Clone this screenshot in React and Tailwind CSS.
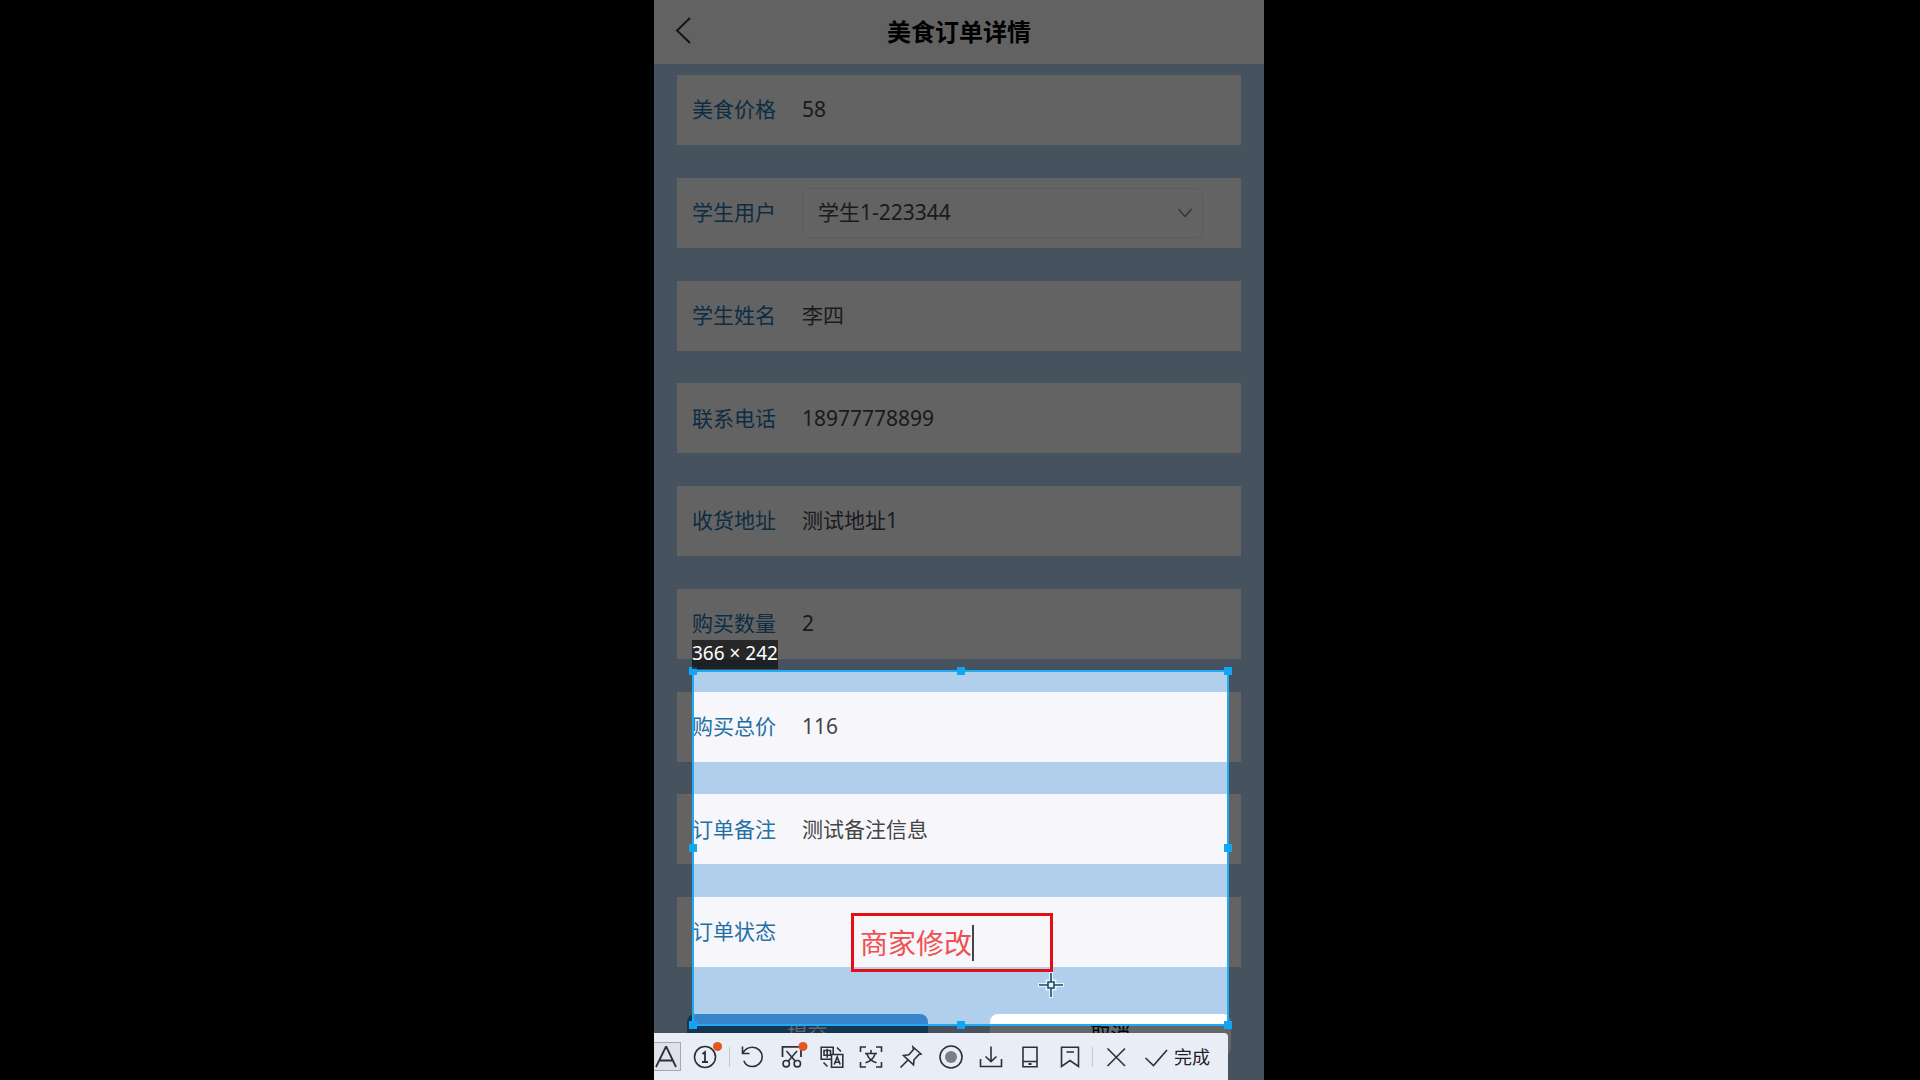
import { useState } from 'react'

const FIELDS = [
  { id: 'price', label: '美食价格', value: '58' },
  { id: 'student', label: '学生用户', value: '学生1-223344', type: 'select' },
  { id: 'name', label: '学生姓名', value: '李四' },
  { id: 'phone', label: '联系电话', value: '18977778899' },
  { id: 'address', label: '收货地址', value: '测试地址1' },
  { id: 'count', label: '购买数量', value: '2' },
  { id: 'total', label: '购买总价', value: '116' },
  { id: 'remark', label: '订单备注', value: '测试备注信息' },
  { id: 'status', label: '订单状态', value: '' },
]

const HANDLES = [
  '-left-[5px] -top-[5px]',
  'left-1/2 -top-[5px] -translate-x-1/2',
  '-right-[5px] -top-[5px]',
  '-left-[5px] top-1/2 -translate-y-1/2',
  '-right-[5px] top-1/2 -translate-y-1/2',
  '-left-[5px] -bottom-[5px]',
  'left-1/2 -bottom-[5px] -translate-x-1/2',
  '-right-[5px] -bottom-[5px]',
]

function Field({ field }) {
  const [value, setValue] = useState(field.value)
  return (
    <div className="flex h-[70px] items-center bg-[#f7f7fb] pl-[15px] pr-[38px] text-[21px]">
      <label htmlFor={field.id} className="w-[110px] shrink-0 text-[#2470a6]">{field.label}</label>
      {field.type === 'select' ? (
        <div className="relative flex-1">
          <select
            id={field.id} value={value} onChange={e => setValue(e.target.value)}
            className="h-[50px] w-full appearance-none rounded-md border border-[#e2e6e2] bg-[#f5f8f4] px-[15px] text-[#444] outline-none"
          >
            <option>学生1-223344</option>
          </select>
          <svg viewBox="0 0 16 10" className="pointer-events-none absolute right-2.5 top-5 h-2.5 w-4" fill="none" stroke="#888c88" strokeWidth="1.6">
            <path d="M1.500 1l6.500 7.500L14.500 1" />
          </svg>
        </div>
      ) : (
        <input
          id={field.id} type="text" value={value}
          onChange={e => setValue(e.target.value)}
          className="min-w-0 flex-1 bg-transparent text-[#444] outline-none"
        />
      )}
    </div>
  )
}

function Tool({ label, children }) {
  return (
    <button type="button" aria-label={label} className="shrink-0">
      <svg viewBox="0 0 24 24" className="size-6 overflow-visible" fill="none" stroke="#2c303a" strokeWidth="1.6">
        {children}
      </svg>
    </button>
  )
}

function Separator() {
  return <span className="h-5 w-px shrink-0 bg-[#c6c9d0]" />
}

function Toolbar() {
  return (
    <div className="absolute bottom-0 left-0 right-9 flex h-[47px] items-center rounded-tr-sm bg-[#e9edf6] pr-[18px]">
      <button type="button" aria-label="文字" className="-ml-0.5 flex h-[29px] w-[29px] items-center justify-center border border-[#a5a8ae] bg-[#dfe2e9]">
        <svg viewBox="0 0 24 24" className="size-6" fill="none" stroke="#2c303a" strokeWidth="1.8">
          <path d="M1 22L10.800 2h.6L21 22M4.500 15.500h13.300" />
        </svg>
      </button>
      <div className="ml-3 mr-3 flex">
        <Tool label="序号">
          <circle cx="12" cy="12" r="10.500" />
          <path d="M9.500 9l2.500-2v10M9 17h6" strokeWidth="1.800" />
          <circle cx="24.500" cy="1.500" r="4.500" fill="#e2571b" stroke="none" />
        </Tool>
      </div>
      <Separator />
      <div className="mx-[10px] flex flex-1 items-center justify-between">
        <Tool label="撤销">
          <path d="M2.500 1.500v7h7M2.800 8.200C5 4.200 8.500 2.300 12.500 2.300c5.500 0 9.700 4.300 9.700 9.600s-4.300 9.600-9.700 9.600c-4.200 0-7.300-2.200-8.700-5.800" />
        </Tool>
        <Tool label="裁剪">
          <path d="M2.500 12V1.800h18.500V12" strokeWidth="1.800" />
          <path d="M6.500 6l9 10.500M17 6l-9 10.500" />
          <circle cx="6.200" cy="18.700" r="3.200" />
          <circle cx="17.300" cy="18.700" r="3.200" />
          <circle cx="23" cy="1.500" r="4.500" fill="#e2571b" stroke="none" />
        </Tool>
        <Tool label="翻译">
          <path d="M11.500 14.200H1.200v-12h12V9M4 5.500h6.500v4.700H4zM7.200 3.700v9" />
          <path d="M11.500 9.500h11.300v12.800H11.500zM14.200 19.500l3-7.500 3 7.500M15.200 17.200h4M17 2.500l4 4M3.500 17.500l4 4" />
        </Tool>
        <Tool label="文字识别">
          <path d="M1.500 7V2H7M17 2h5.500v5M22.500 17v5H17M7 22H1.500v-5" />
          <path d="M12 5v3M6 8.500h12M8 9c1.200 4 4.500 7.300 9.500 8.800M16 9c-1.200 4-4.500 7.300-9.500 8.800" />
        </Tool>
        <Tool label="钉住">
          <path d="M14 2l8 7-2 .5-5 5.300-.5 5L4.500 10.500l5.300-.8 4.700-5.200zM9 15l-7.500 7.500" />
        </Tool>
        <Tool label="录制">
          <circle cx="12" cy="12" r="11" />
          <circle cx="12" cy="12" r="6" fill="#7b7e86" stroke="none" />
        </Tool>
        <Tool label="保存">
          <path d="M12 1.500v15M6.500 11.500l5.500 5.200 5.500-5.200M1.500 14v7.500h21V14" />
        </Tool>
        <Tool label="发送到手机">
          <path d="M5 2.200h14v19.500H5zM5 16.500h14" />
          <path d="M10.500 19h3" strokeWidth="2" />
        </Tool>
        <Tool label="收藏">
          <path d="M3.500 2.200h17v19.300L12 15.500l-8.500 6zM8.500 7h7.500" />
        </Tool>
      </div>
      <Separator />
      <div className="ml-[11px] flex items-center gap-4">
        <Tool label="关闭">
          <path d="M3.500 3.500l17.500 17.500M21 3.500L3.500 21" />
        </Tool>
        <button type="button" className="flex items-center gap-1.5 text-lg text-[#1c2028]">
          <svg viewBox="0 0 24 24" className="size-6" fill="none" stroke="#2c303a" strokeWidth="1.6">
            <path d="M1.500 13l8 7.500L23 5" />
          </svg>
          完成
        </button>
      </div>
    </div>
  )
}

function Annotation() {
  const [text, setText] = useState('商家修改')
  return (
    <div className="absolute left-[197px] top-[913px] flex h-[59px] w-[202px] items-center border-[3px] border-[#e30f17] pl-1.5">
      <input
        type="text" aria-label="标注文字" value={text}
        onChange={e => setText(e.target.value)}
        className="h-9 w-28 bg-transparent text-[28px] text-[#f0504f] outline-none"
      />
      <span className="h-9 w-0.5 bg-[#444]" />
    </div>
  )
}

function Crosshair() {
  return (
    <svg viewBox="0 0 28 28" className="absolute left-[383px] top-[971px] size-7" fill="none">
      <g stroke="#e6f3fb" strokeWidth="4">
        <path d="M1 14h26M14 1v26" />
        <path d="M10.500 10.500h7v7h-7z" />
      </g>
      <path d="M11 11h6v6h-6z" fill="#e6f3fb" />
      <path d="M2 14h8.500M17.500 14H26M14 2v8.500M14 17.500V26M11 11h6v6h-6z" stroke="#1b4c64" strokeWidth="1.600" />
    </svg>
  )
}

export default function App() {
  return (
    <div className="flex min-h-screen justify-center bg-black pr-0.5 font-['Noto_Sans','Noto_Sans_CJK_SC',sans-serif]">
      <div className="relative flex w-full max-w-[610px] flex-col overflow-hidden bg-[#afcfec]">
        <header className="relative flex h-16 items-center justify-center bg-[#f5f5f5]">
          <button type="button" aria-label="返回" className="absolute left-5 top-4">
            <svg viewBox="0 0 18 28" className="h-7 w-[18px]" fill="none" stroke="#333" strokeWidth="2">
              <path d="M16 2L3 14.500 16 27" />
            </svg>
          </button>
          <h1 className="text-2xl font-bold text-black">美食订单详情</h1>
        </header>

        <form className="flex flex-1 flex-col px-[23px] pb-6 pt-[11px]" onSubmit={e => e.preventDefault()}>
          <div className="flex flex-1 flex-col justify-between">
            {FIELDS.map(f => <Field key={f.id} field={f} />)}
          </div>
          <div className="mt-[47px] flex gap-[62px] px-2.5 text-xl">
            <button type="submit" className="h-[42px] flex-1 rounded-lg bg-[#3785cb] text-white">提交</button>
            <button type="button" className="h-[42px] flex-1 rounded-lg bg-white text-black">取消</button>
          </div>
        </form>

        {/* Capture selection, its spread shadow dims everything outside */}
        <div className="pointer-events-none absolute left-[38px] top-[670px] h-[356px] w-[537px] border-2 border-[#1eaaf5] shadow-[0_0_0_2000px_rgba(0,0,0,0.6)]">
          {HANDLES.map(pos => <span key={pos} className={`absolute size-2 bg-[#12a5f4] ${pos}`} />)}
        </div>
        <div className="absolute left-[38px] top-[640px] flex h-[29px] items-start bg-black/60 text-[19px] leading-[26px] text-white">
          366 × 242
        </div>

        <Annotation />
        <Crosshair />
        <Toolbar />
      </div>
    </div>
  )
}
